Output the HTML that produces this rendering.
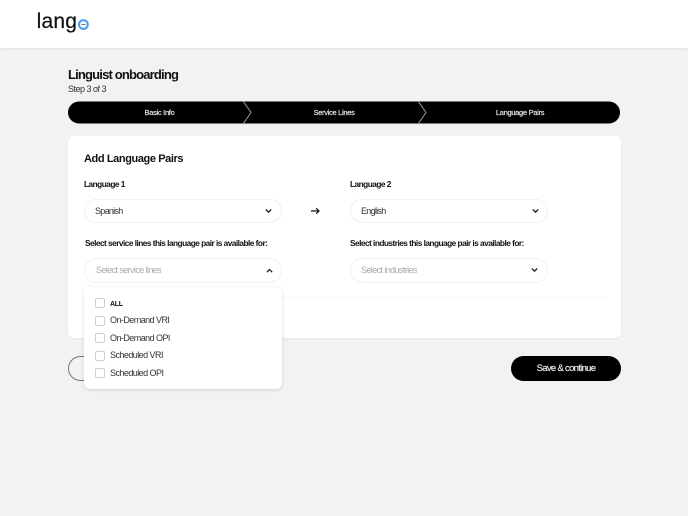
<!DOCTYPE html>
<html><head><meta charset="utf-8"><style>
html,body{margin:0;padding:0}
body{width:688px;height:516px;background:#f2f2f2;position:relative;overflow:hidden;font-family:"Liberation Sans",sans-serif;color:#111}
.a{position:absolute;white-space:nowrap}
.sel{position:absolute;background:#fff;border:1px solid #f0f0f0;border-radius:18px;box-sizing:border-box;height:25px}
.lbl{font-size:8.3px;font-weight:700;letter-spacing:-.53px;color:#111}
.val{font-size:9px;letter-spacing:-.72px;color:#333}
.ph{font-size:9px;letter-spacing:-.6px;color:#aaa}
.cb{position:absolute;left:95px;width:10px;height:10px;box-sizing:border-box;border:1px solid #cfcfcf;border-radius:2px;background:#fff}
.it{position:absolute;left:110px;font-size:9px;letter-spacing:-.55px;color:#333;white-space:nowrap}
.st{font-size:7.5px;line-height:12px;color:#eee;text-align:center;letter-spacing:-.3px;-webkit-text-stroke:.15px #eee}
</style></head><body>
<div class="a" style="left:0;top:0;width:688px;height:48px;background:#fff;box-shadow:0 1px 3px rgba(0,0,0,.08)"></div>
<div class="a" style="left:36.6px;top:7px;font-size:21px;line-height:30px;letter-spacing:.2px;color:#111;-webkit-text-stroke:.2px #111">lang</div>
<svg class="a" style="left:77px;top:18px" width="13" height="13" viewBox="0 0 13 13"><circle cx="6.4" cy="6.5" r="4.4" fill="none" stroke="#4a9bf5" stroke-width="2"/><path d="M4.400 6.500h4" stroke="#444" stroke-width="1" stroke-dasharray="1 .5"/></svg>

<div class="a" style="left:68px;top:67px;font-size:13px;line-height:16px;font-weight:700;letter-spacing:-.82px;color:#111">Linguist onboarding</div>
<div class="a" style="left:68px;top:83px;font-size:9px;line-height:12px;letter-spacing:-.5px;color:#333">Step 3 of 3</div>

<svg class="a" style="left:68px;top:101px" width="552" height="23" viewBox="0 0 552 23"><rect x="0" y="0.5" width="552" height="22" rx="11" fill="#000"/><path d="M175 0l8 11.500-8 11.500M350 0l8 11.500-8 11.500" fill="none" stroke="#999" stroke-width="1"/></svg>
<div class="a st" style="left:68px;top:107px;width:183px">Basic Info</div>
<div class="a st" style="left:244px;top:107px;width:180px">Service Lines</div>
<div class="a st" style="left:420px;top:107px;width:200px">Language Pairs</div>

<div class="a" style="left:68px;top:136px;width:553px;height:202px;background:#fff;border-radius:6px;box-shadow:0 1px 2px rgba(0,0,0,.05)"></div>
<div class="a" style="left:84px;top:152px;font-size:11px;line-height:14px;font-weight:700;letter-spacing:-.4px;color:#111">Add Language Pairs</div>
<div class="a lbl" style="left:84px;top:177.500px;line-height:12px">Language 1</div>
<div class="a lbl" style="left:350px;top:177.500px;line-height:12px">Language 2</div>

<div class="sel" style="left:84px;top:199px;width:198px;height:24px"></div>
<div class="a val" style="left:95px;top:205px;line-height:12px">Spanish</div>
<svg class="a" style="left:264px;top:207px" width="9" height="8" viewBox="0 0 9 8"><path d="M1.800 2.500L4.500 5.200 7.200 2.500" fill="none" stroke="#222" stroke-width="1.300"/></svg>

<svg class="a" style="left:310px;top:206px" width="11" height="10" viewBox="0 0 11 10"><path d="M1 5h8M6.200 2.300L9 5 6.200 7.700" fill="none" stroke="#111" stroke-width="1.200"/></svg>

<div class="sel" style="left:350px;top:199px;width:198px;height:24px"></div>
<div class="a val" style="left:361px;top:205px;line-height:12px">English</div>
<svg class="a" style="left:531px;top:207px" width="9" height="8" viewBox="0 0 9 8"><path d="M1.800 2.500L4.500 5.200 7.200 2.500" fill="none" stroke="#222" stroke-width="1.300"/></svg>

<div class="a lbl" style="left:85px;top:237px;line-height:12px">Select service lines this language pair is available for:</div>
<div class="a lbl" style="left:350px;top:237px;line-height:12px">Select industries this language pair is available for:</div>

<div class="sel" style="left:84px;top:258px;width:198px"></div>
<div class="a ph" style="left:96px;top:264px;line-height:12px">Select service lines</div>
<svg class="a" style="left:264.500px;top:267px" width="9" height="8" viewBox="0 0 9 8"><path d="M1.800 5.200L4.500 2.500 7.200 5.200" fill="none" stroke="#222" stroke-width="1.300"/></svg>

<div class="sel" style="left:350px;top:258px;width:198px"></div>
<div class="a ph" style="left:361px;top:264px;line-height:12px">Select industries</div>
<svg class="a" style="left:530px;top:266px" width="9" height="8" viewBox="0 0 9 8"><path d="M1.800 2.500L4.500 5.200 7.200 2.500" fill="none" stroke="#222" stroke-width="1.300"/></svg>

<div class="a" style="left:84px;top:297px;width:522px;height:1px;background:#f6f6f6"></div>

<div class="a" style="left:68px;top:356px;width:60px;height:25px;border:1px solid #777;border-radius:13px;box-sizing:border-box"></div>

<div class="a" style="left:84px;top:287px;width:198px;height:102px;background:#fff;border-radius:6px;box-shadow:0 1px 4px rgba(0,0,0,.12)"></div>
<div class="cb" style="top:298px"></div><div class="it" style="top:298.500px;line-height:12px;font-size:7px;font-weight:700;letter-spacing:-.3px;color:#111">ALL</div>
<div class="cb" style="top:315.500px"></div><div class="it" style="top:314px;line-height:12px">On-Demand VRI</div>
<div class="cb" style="top:333px"></div><div class="it" style="top:332px;line-height:12px">On-Demand OPI</div>
<div class="cb" style="top:350.500px"></div><div class="it" style="top:349px;line-height:12px">Scheduled VRI</div>
<div class="cb" style="top:368px"></div><div class="it" style="top:367px;line-height:12px">Scheduled OPI</div>

<div class="a" style="left:511px;top:356px;width:110px;height:25px;background:#000;border-radius:13px;color:#eee;font-size:9.500px;line-height:25px;letter-spacing:-.7px;text-align:center;-webkit-text-stroke:.15px #eee">Save &amp; continue</div>
</body></html>
